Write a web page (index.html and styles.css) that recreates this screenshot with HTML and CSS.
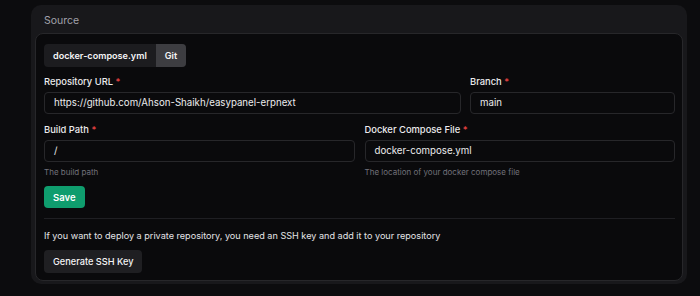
FILE: index.html
```html
<!DOCTYPE html>
<html lang="en">
<head>
  <meta charset="UTF-8">
  <meta name="viewport" content="width=device-width, initial-scale=1.0">
  <title>Source</title>
  <link rel="stylesheet" href="styles.css">
</head>
<body>
  <div class="source-card">
    <div class="card-title">Source</div>
    <div class="card-body">
      <div class="tab-group">
        <button class="tab-btn">docker-compose.yml</button>
        <button class="tab-btn active">Git</button>
      </div>

      <div class="field-row wide">
        <div class="field">
          <label>Repository URL <span class="req">*</span></label>
          <div class="text-box">https://github.com/Ahson-Shaikh/easypanel-erpnext</div>
        </div>
        <div class="field">
          <label>Branch <span class="req">*</span></label>
          <div class="text-box">main</div>
        </div>
      </div>

      <div class="field-row half">
        <div class="field">
          <label>Build Path <span class="req">*</span></label>
          <div class="text-box">/</div>
          <p class="hint">The build path</p>
        </div>
        <div class="field">
          <label>Docker Compose File <span class="req">*</span></label>
          <div class="text-box">docker-compose.yml</div>
          <p class="hint">The location of your docker compose file</p>
        </div>
      </div>

      <button class="save-btn">Save</button>

      <div class="split-line"></div>

      <p class="ssh-note">If you want to deploy a private repository, you need an SSH key and add it to your repository</p>
      <button class="ssh-btn">Generate SSH Key</button>
    </div>
  </div>
</body>
</html>
```

FILE: styles.css
```css
body {
  font-family: 'Inter', sans-serif;
  margin: 0;
  background: #0c0c0e;
  padding: 5px 13px 0 31px;
  color: #e4e4e7;
}

.source-card {
  background: #18181b;
  border-radius: 10px;
  padding: 0 4px 3px 4px;
  height: 279px;
  box-sizing: border-box;
}

.card-title {
  height: 28px;
  line-height: 32px;
  padding-left: 9px;
  font-size: 10.5px;
  color: #a1a1aa;
}

.card-body {
  background: #0a0a0c;
  border: 1px solid #27272a;
  border-radius: 8px;
  padding: 9px 7px 0 8px;
  height: 248px;
  box-sizing: border-box;
}

button {
  font-family: 'Inter', sans-serif;
  border: none;
  cursor: pointer;
}

.tab-group {
  display: inline-flex;
  background: #1c1c1f;
  border-radius: 4px;
  overflow: hidden;
  height: 23px;
}

.tab-btn {
  background: transparent;
  color: #f4f4f5;
  font-size: 9.1px;
  font-weight: 600;
  padding: 0 9px;
}

.tab-btn.active {
  background: #3d3d41;
}

.field-row {
  display: grid;
  margin-top: 9px;
}

.field-row.wide {
  grid-template-columns: 417px 1fr;
  gap: 9px;
}

.field-row.half {
  grid-template-columns: 1fr 1fr;
  gap: 10px;
  margin-top: 10px;
}

.field label {
  display: block;
  font-size: 9.4px;
  font-weight: 500;
  line-height: 12px;
  margin-bottom: 4px;
  color: #ececee;
}

.req {
  color: #ef4444;
}

.text-box {
  height: 22px;
  box-sizing: border-box;
  border: 1px solid #27272a;
  border-radius: 4px;
  padding: 0 9px;
  font-size: 9.7px;
  line-height: 20px;
  color: #ececee;
}

.hint {
  margin: 5px 0 0;
  font-size: 8px;
  line-height: 11px;
  color: #71717a;
}

.save-btn {
  display: block;
  margin-top: 8px;
  height: 22px;
  padding: 0 9px;
  background: #0f9d6e;
  color: #fff;
  font-size: 9.5px;
  font-weight: 600;
  border-radius: 4px;
}

.split-line {
  height: 1px;
  background: #1f1f23;
  margin-top: 10px;
}

.ssh-note {
  margin: 10px 0 0;
  font-size: 9.1px;
  line-height: 13px;
  color: #e4e4e7;
}

.ssh-btn {
  display: block;
  margin-top: 8px;
  height: 23px;
  padding: 0 9px;
  background: #1f1f22;
  color: #f4f4f5;
  font-size: 9.2px;
  font-weight: 500;
  border-radius: 4px;
}
```
